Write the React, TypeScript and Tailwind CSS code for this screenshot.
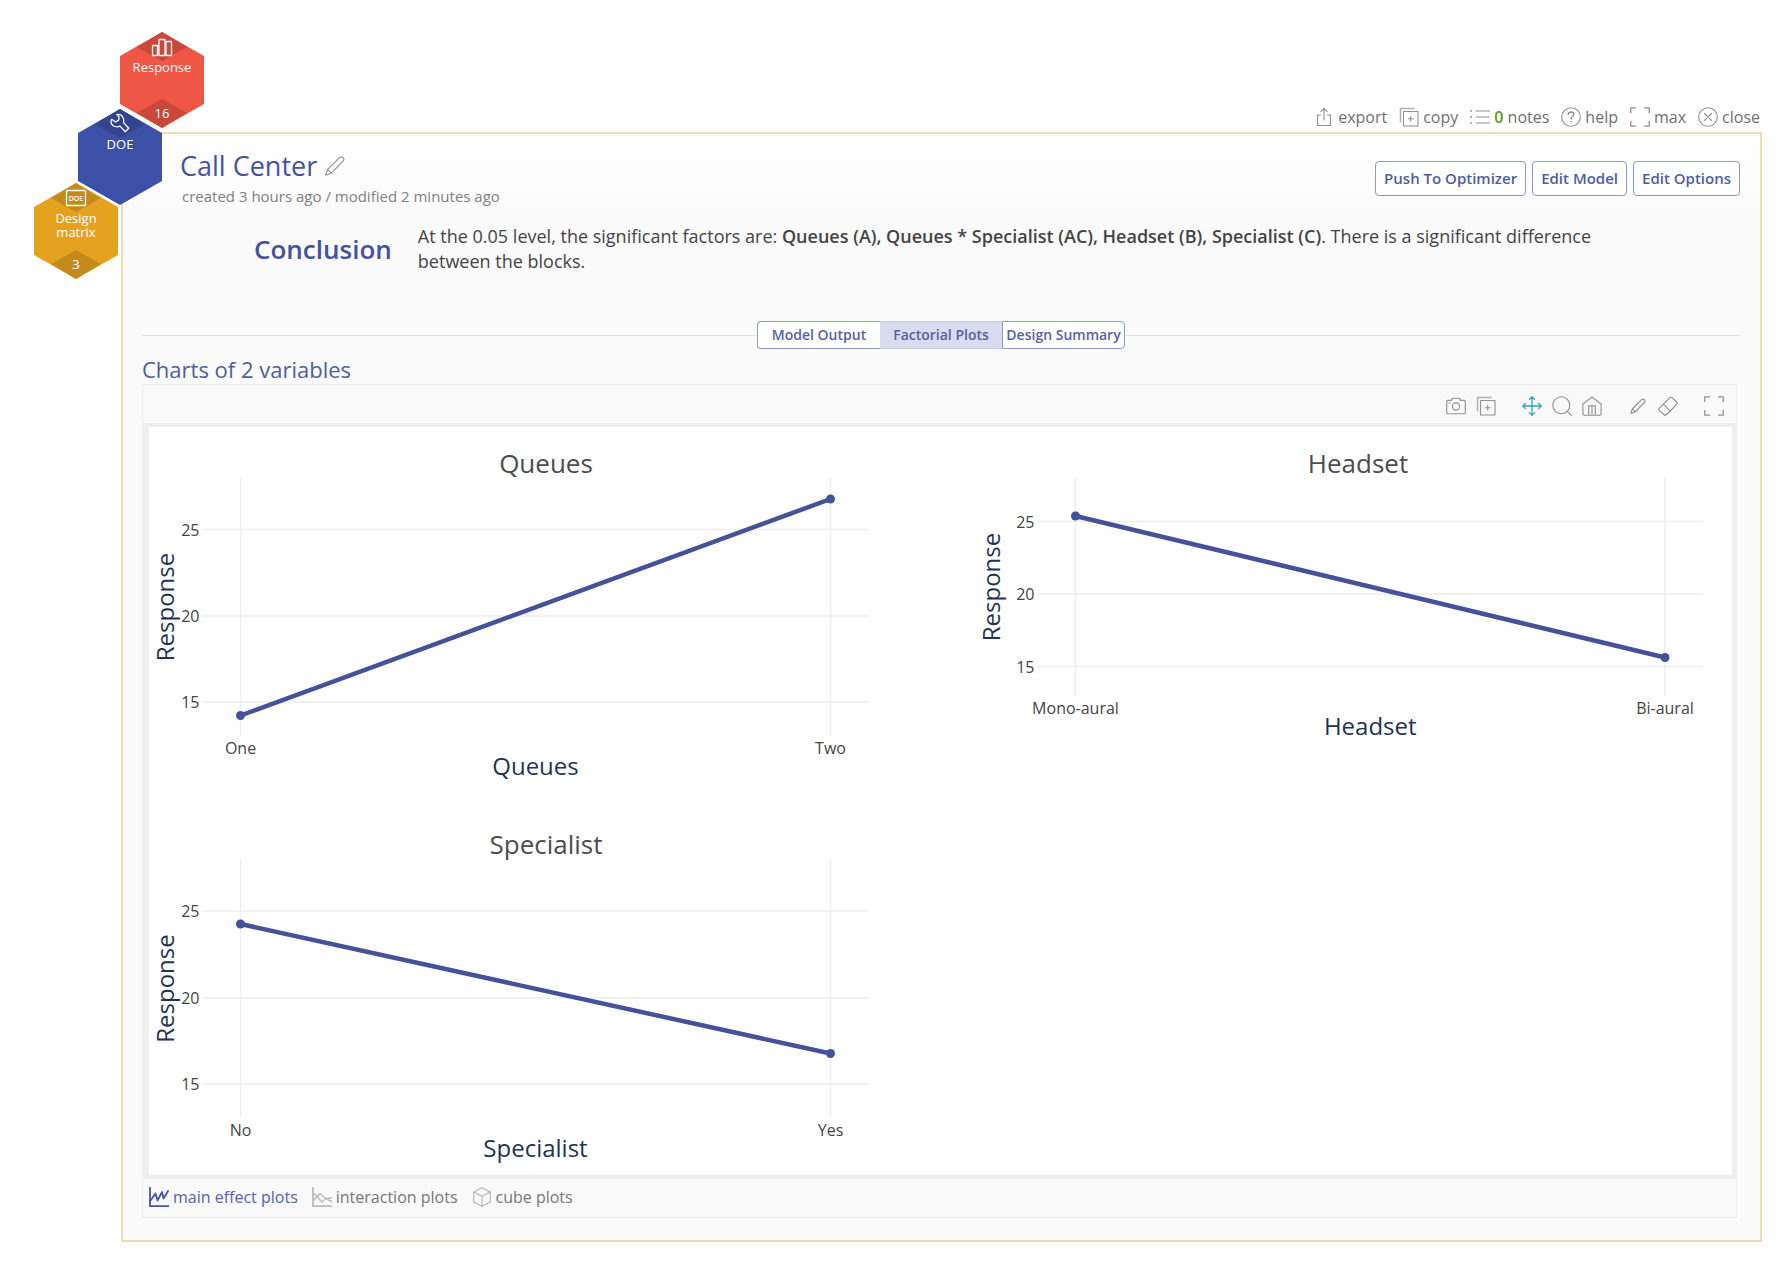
import React from 'react';

type IconProps = { className?: string; children: React.ReactNode };

const Icon: React.FC<IconProps> = ({ className = 'text-[#909090]', children }) => (
    <svg
        viewBox="0 0 20 20"
        fill="none"
        stroke="currentColor"
        strokeWidth="1.1"
        strokeLinecap="round"
        strokeLinejoin="round"
        aria-hidden="true"
        className={`size-5 shrink-0 ${className}`}
    >
        {children}
    </svg>
);

const ExportIcon = () => (
    <Icon>
        <path d="M6.500 8H3.500v10.500h13V8h-3M10 13V1.500M6.800 4.600 10 1.400l3.200 3.200" />
    </Icon>
);

const CopyIcon = () => (
    <Icon>
        <path d="M4.500 4.500h14.500v14.500H4.500zM9.200 11.700h5M11.700 9.200v5" />
        <path d="M1.500 15.500V1.500h14" stroke="#b0b0b0" strokeWidth="1.500" strokeLinecap="butt" />
    </Icon>
);

const NotesIcon = () => (
    <Icon>
        <path d="M6 4h14M6 10h14M6 16h14" />
        <path d="M1 3.500v.8M1 9.500v.8M1 15.500v.8" strokeWidth="1.6" />
    </Icon>
);

const HelpIcon = () => (
    <Icon>
        <circle cx="10" cy="10" r="9.300" />
        <path d="M7.300 7.600c0-1.700 1.200-2.700 2.800-2.700 1.500 0 2.700.9 2.700 2.400 0 2.200-2.700 2.200-2.700 4.600M10.100 14.400v.5" strokeWidth="1.5" />
    </Icon>
);

const MaxIcon = () => (
    <Icon>
        <path d="M.8 6V.8H6M14 .8h5.200V6M19.200 14v5.200H14M6 19.200H.8V14" strokeWidth="1.3" strokeLinecap="butt" />
    </Icon>
);

const CloseIcon = () => (
    <Icon>
        <circle cx="10" cy="10" r="9.300" />
        <path d="m6.500 6.500 7 7M13.500 6.500l-7 7" />
    </Icon>
);

const PencilIcon = () => (
    <Icon>
        <path d="M.8 19.200 2.500 13.700 14.600 1.700c1-1 2.500-1 3.500 0s1 2.400 0 3.400L6.100 17.300zM2.500 13.700c1.600.5 2.900 1.800 3.600 3.600" />
    </Icon>
);

const SmallPencilIcon = () => (
    <Icon>
        <path d="M3 17.500 4.200 13 13.600 3.700c.8-.8 2-.8 2.800 0s.8 2 0 2.800L7.100 16zM4.200 13c1.300.4 2.400 1.500 2.900 3" />
    </Icon>
);

const CameraIcon = () => (
    <Icon>
        <path d="M.7 5.500c0-.7.400-1.100 1.100-1.100h3.400l1.400-2.100h6.800l1.400 2.100h3.400c.7 0 1.100.4 1.100 1.100v11.200c0 .7-.4 1.100-1.100 1.100H1.800c-.7 0-1.100-.4-1.100-1.100z" />
        <circle cx="10" cy="10.500" r="3.600" />
        <path d="M3 7h1.200" />
    </Icon>
);

const MoveIcon = () => (
    <Icon className="text-[#35a0c4]">
        <path
            d="M10 .8v18.400M.8 10h18.400M7.400 3.400 10 .8l2.600 2.600M7.400 16.600l2.600 2.600 2.600-2.600M3.400 7.400.8 10l2.600 2.600M16.600 7.400l2.600 2.600-2.600 2.600"
            strokeWidth="1.3"
        />
    </Icon>
);

const SearchIcon = () => (
    <Icon>
        <circle cx="9.300" cy="9.300" r="8.500" />
        <path d="m15.400 15.400 4 4" />
    </Icon>
);

const HomeIcon = () => (
    <Icon>
        <path d="M.9 8 10 .9 19.100 8v9.500c0 1-.6 1.700-1.600 1.700h-15c-1 0-1.600-.7-1.600-1.700zM6.700 19V9.900h6.600V19M10 10v9" />
    </Icon>
);

const EraserIcon = () => (
    <Icon>
        <path d="M1.200 12.300 11.700 1.800c.8-.8 1.800-.8 2.600 0l4.200 4.200c.8.8.8 1.800 0 2.600L8.600 18.500c-.8.8-1.900.8-2.700 0l-4.700-4.200c-.6-.6-.6-1.400 0-2zM5.300 8.200l6.700 6.700" />
    </Icon>
);

const MainEffectIcon = () => (
    <Icon className="text-[#4655a5]">
        <path d="M1 .8v18.400h18.500" strokeWidth="1.8" />
        <path d="m1.500 13.500 5-7 2 7 4.500-8.500 1.500 6.500 4.500-7.500" strokeWidth="1.800" />
    </Icon>
);

const InteractionIcon = () => (
    <Icon className="text-[#bcbcbc]">
        <path d="M1 .8v18.400h19" strokeWidth="1.8" />
        <path d="m1.500 6 8.500 9 4-3.500 5.500-.5M1.500 13.500 8 6.500l5 4.500 6.500 3.500" strokeWidth="1.500" />
    </Icon>
);

const CubeIcon = () => (
    <Icon className="text-[#b4b4b4]">
        <path d="M10 .8 18.300 5v10L10 19.200 1.700 15V5zM1.700 5 10 9.300 18.300 5M10 9.300v9.900" />
    </Icon>
);

type HexagonProps = {
    lines: string[];
    count?: string;
    fill: string;
    shade: string;
    className: string;
    children: React.ReactNode;
};

const Hexagon: React.FC<HexagonProps> = ({ lines, count, fill, shade, className, children }) => (
    <a href="#" className={`absolute block ${className}`}>
        <svg width="84" height="96" viewBox="0 0 84 96" className="block font-['Open_Sans',sans-serif] text-[13px]">
            <polygon points="42,0 84,24 84,72 42,96 0,72 0,24" fill={fill} />
            <polygon points="42,0 67,15 42,29 17,15" fill={shade} />
            {count && <polygon points="42,67 67,81 42,96 17,81" fill={shade} />}
            <g fill="none" stroke="#fff" strokeWidth="1.3" strokeLinejoin="round">
                {children}
            </g>
            {lines.map((line, i) => (
                <text key={line} x="42" y={40 + i * 14} textAnchor="middle" fill="#fff">
                    {line}
                </text>
            ))}
            {count && (
                <text x="42" y="86" textAnchor="middle" fill="#fff">
                    {count}
                </text>
            )}
        </svg>
    </a>
);

const FlowNav = () => (
    <nav aria-label="Analysis steps">
        <Hexagon lines={['Response']} count="16" fill="#ee5645" shade="#c9483a" className="left-[120px] top-8">
            <path d="M32.500 13.500h5v10h-5zM39 7.500h6v16h-6zM46 9.500h5.500v14H46z" />
        </Hexagon>
        <Hexagon lines={['DOE']} fill="#3c50a8" shade="#33448f" className="left-[78px] top-[109px]">
            <path d="M38.700 5.600c2.700-.5 5 .4 6.200 2.600 1 1.800 1.100 3.700.7 5.400l5.100 5.700-3.400 3.400-5.300-5.600c-1.700.8-3.500 1-5.200.4-2.200-.8-3.700-2.600-3.900-4.900l.8-2.300 4 2.700 3-2 .3-3.300z" />
        </Hexagon>
        <Hexagon lines={['Design', 'matrix']} count="3" fill="#e5a21f" shade="#c48a1b" className="left-[34px] top-[183px]">
            <rect x="32.500" y="7.500" width="19" height="15" rx="1" />
            <text x="42" y="18" textAnchor="middle" fontSize="7" fontWeight="600" fill="#fff" stroke="none">
                DOE
            </text>
        </Hexagon>
    </nav>
);

type Plot = {
    name: string;
    left: number;
    right: number;
    top: number;
    bottom: number;
    titleX: number;
    ticks: { label: string; y: number }[];
    levels: [string, string];
    points: [number, number];
};

const plots: Plot[] = [
    {
        name: 'Queues',
        left: 91.5,
        right: 681.5,
        top: 51,
        bottom: 309,
        titleX: 397,
        ticks: [
            { label: '25', y: 102.5 },
            { label: '20', y: 189 },
            { label: '15', y: 275 },
        ],
        levels: ['One', 'Two'],
        points: [288.5, 72],
    },
    {
        name: 'Headset',
        left: 926.5,
        right: 1516,
        top: 51,
        bottom: 269,
        titleX: 1209,
        ticks: [
            { label: '25', y: 94.5 },
            { label: '20', y: 167 },
            { label: '15', y: 239.5 },
        ],
        levels: ['Mono-aural', 'Bi-aural'],
        points: [89, 230.5],
    },
    {
        name: 'Specialist',
        left: 91.5,
        right: 681.5,
        top: 432,
        bottom: 691,
        titleX: 397,
        ticks: [
            { label: '25', y: 484 },
            { label: '20', y: 571 },
            { label: '15', y: 657 },
        ],
        levels: ['No', 'Yes'],
        points: [497, 626.5],
    },
];

const EffectPlot: React.FC<{ plot: Plot }> = ({ plot }) => {
    const { name, left, right, top, bottom, titleX, ticks, levels, points } = plot;
    const middle = (left + right) / 2;
    const labelX = name === 'Headset' ? left - 76 : left - 67;
    const labelY = (top + bottom) / 2;

    return (
        <g>
            <g stroke="#eeeeee" strokeWidth="1.5">
                <line x1={left} x2={left} y1={top} y2={bottom} />
                <line x1={right} x2={right} y1={top} y2={bottom} />
                {ticks.map((tick) => (
                    <line key={tick.label} x1={left - 38} x2={right + 38} y1={tick.y} y2={tick.y} />
                ))}
            </g>
            <line x1={left} y1={points[0]} x2={right} y2={points[1]} stroke="#435299" strokeWidth="4.500" />
            <circle cx={left} cy={points[0]} r="4.500" fill="#435299" />
            <circle cx={right} cy={points[1]} r="4.500" fill="#435299" />
            <g fontSize="16" fill="#444">
                {ticks.map((tick) => (
                    <text key={tick.label} x={left - 41} y={tick.y + 6} textAnchor="end">
                        {tick.label}
                    </text>
                ))}
                <text x={left} y={bottom + 18} textAnchor="middle">
                    {levels[0]}
                </text>
                <text x={right} y={bottom + 18} textAnchor="middle">
                    {levels[1]}
                </text>
            </g>
            <text x={titleX} y={top - 5} textAnchor="middle" fontSize="26" fill="#4d4d4d">
                {name}
            </text>
            <g fontSize="24" fill="#1f3354" textAnchor="middle">
                <text x={middle} y={bottom + 39}>
                    {name}
                </text>
                <text transform={`translate(${labelX} ${labelY}) rotate(-90)`}>Response</text>
            </g>
        </g>
    );
};

const PanelActions = () => (
    <div className="flex h-[27px] items-start justify-end gap-3 pr-0.5 leading-6 text-[#707070]">
        <button type="button" className="flex items-center gap-1">
            <ExportIcon />
            export
        </button>
        <button type="button" className="flex items-center gap-1">
            <CopyIcon />
            copy
        </button>
        <button type="button" className="flex items-center gap-1">
            <NotesIcon />
            <span>
                <b className="font-semibold text-[#5b9a1f]">0</b> notes
            </span>
        </button>
        <button type="button" className="flex items-center gap-1">
            <HelpIcon />
            help
        </button>
        <button type="button" className="flex items-center gap-1">
            <MaxIcon />
            max
        </button>
        <button type="button" className="flex items-center gap-1">
            <CloseIcon />
            close
        </button>
    </div>
);

const outlineButton = 'h-[35px] rounded border border-[#8a98cc] bg-white px-2 text-[15px] font-semibold text-[#4d5da6]';

const App: React.FC = () => {
    return (
        <div className="relative min-h-screen bg-white pt-[105px] pr-[30px] pb-9 pl-[121px] font-['Open_Sans',sans-serif] text-base">
            <PanelActions />

            <main className="border-2 border-[#ecdcb0] bg-[#fafafa] bg-linear-to-b from-white to-[#fafafa] to-[80px] pt-3.5 pr-5 pb-[22px] pl-[19px]">
                <header className="flex items-start justify-between pl-[38px]">
                    <div>
                        <div className="flex items-center gap-2">
                            <h1 className="text-[27px] leading-9 text-[#43539f]">Call Center</h1>
                            <button type="button" aria-label="Rename">
                                <PencilIcon />
                            </button>
                        </div>
                        <p className="mt-0.5 pl-0.5 text-[15px] leading-5 text-[#808080]">
                            created 3 hours ago / modified 2 minutes ago
                        </p>
                    </div>
                    <div className="flex gap-1.5 pt-[13px]">
                        <button type="button" className={outlineButton}>
                            Push To Optimizer
                        </button>
                        <button type="button" className={outlineButton}>
                            Edit Model
                        </button>
                        <button type="button" className={outlineButton}>
                            Edit Options
                        </button>
                    </div>
                </header>

                <section className="mt-[18px] flex items-center gap-[26px] pr-[120px] pl-28">
                    <h2 className="text-[26px] leading-[50px] font-semibold text-[#43539f]">Conclusion</h2>
                    <p className="text-lg leading-[25px] text-[#444]">
                        At the 0.05 level, the significant factors are:{' '}
                        <b className="font-semibold">Queues (A), Queues * Specialist (AC), Headset (B), Specialist (C)</b>. There is
                        a significant difference between the blocks.
                    </p>
                </section>

                <div className="mt-[47px] flex items-center text-sm font-semibold text-[#5562a5]">
                    <span className="h-px flex-1 bg-[#e2e2e2]" />
                    <button type="button" className="h-7 w-[123px] rounded-l border border-r-0 border-[#8e9bc9] bg-white">
                        Model Output
                    </button>
                    <button type="button" className="h-7 w-[122px] border-y border-[#c6cce6] bg-[#d8dcee]">
                        Factorial Plots
                    </button>
                    <button type="button" className="h-7 w-[123px] rounded-r border border-[#8e9bc9] bg-white">
                        Design Summary
                    </button>
                    <span className="h-px flex-1 bg-[#e2e2e2]" />
                </div>

                <h3 className="mt-1.5 text-[22px] leading-7 text-[#4f5f9f]">Charts of 2 variables</h3>

                <section className="mt-px mr-[3px] border border-[#ededed] bg-[#f9f9f9]">
                    <div className="flex h-[38px] items-center justify-end gap-[26px] pt-1 pr-3">
                        <div className="flex gap-[10px]">
                            <button type="button" aria-label="Save image">
                                <CameraIcon />
                            </button>
                            <button type="button" aria-label="Copy chart">
                                <CopyIcon />
                            </button>
                        </div>
                        <div className="flex gap-[10px]">
                            <button type="button" aria-label="Pan">
                                <MoveIcon />
                            </button>
                            <button type="button" aria-label="Zoom">
                                <SearchIcon />
                            </button>
                            <button type="button" aria-label="Reset view">
                                <HomeIcon />
                            </button>
                        </div>
                        <div className="flex gap-[10px]">
                            <button type="button" aria-label="Draw">
                                <SmallPencilIcon />
                            </button>
                            <button type="button" aria-label="Erase">
                                <EraserIcon />
                            </button>
                        </div>
                        <button type="button" aria-label="Full screen">
                            <MaxIcon />
                        </button>
                    </div>

                    <div className="border-y-4 border-r-4 border-l-[6px] border-[#efefef] bg-white">
                        <svg viewBox="0 0 1583 748" className="block h-auto w-full">
                            {plots.map((plot) => (
                                <EffectPlot key={plot.name} plot={plot} />
                            ))}
                        </svg>
                    </div>

                    <div className="flex h-[38px] items-center gap-3.5 pb-0.5 pl-1.5 text-[#777]">
                        <button type="button" className="flex items-center gap-1 text-[#5563ab]">
                            <MainEffectIcon />
                            main effect plots
                        </button>
                        <button type="button" className="flex items-center gap-1">
                            <InteractionIcon />
                            interaction plots
                        </button>
                        <button type="button" className="flex items-center gap-1">
                            <CubeIcon />
                            cube plots
                        </button>
                    </div>
                </section>
            </main>

            <FlowNav />
        </div>
    );
};

export default App;
